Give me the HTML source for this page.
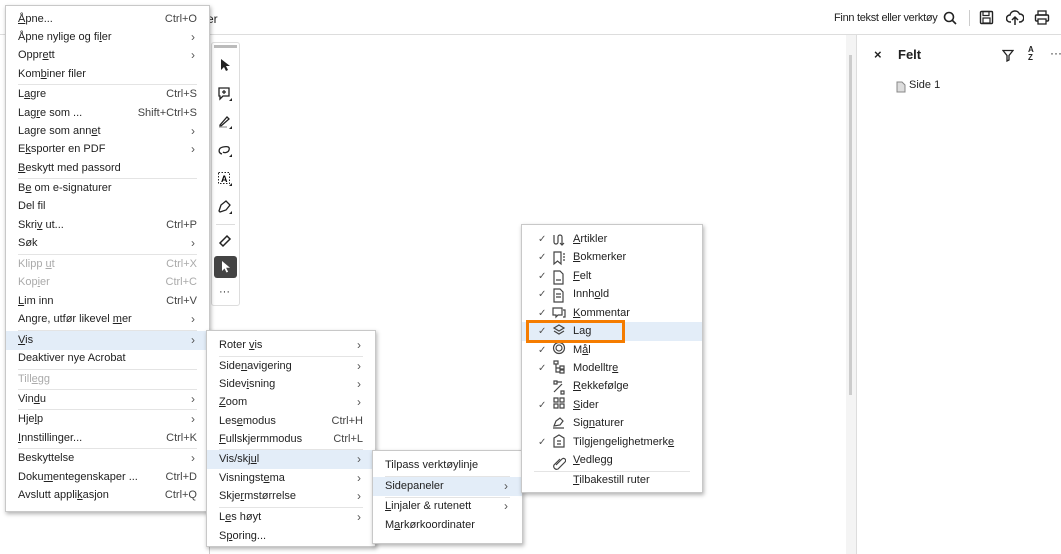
<!DOCTYPE html>
<html><head><meta charset="utf-8"><style>
*{margin:0;padding:0;box-sizing:border-box}
body{width:1061px;height:554px;position:relative;overflow:hidden;background:#fff;font-family:"Liberation Sans",sans-serif;font-size:11px;color:#222}
.a{position:absolute}
.m{position:absolute;background:#fff;border:1px solid #c8c8c8;box-shadow:1px 2px 4px rgba(0,0,0,.3)}
.r{position:absolute;left:0;right:0;height:19px;line-height:19px;padding-left:12px}
.r .k{position:absolute;right:12px;top:0;color:#444}
.r .c{position:absolute;right:14px;top:0;color:#555;font-size:12px}
.d{color:#aaa}.d .k{color:#aaa}
.h{background:#e3edf8}
.s{position:absolute;left:12px;right:12px;height:1px;background:#e4e4e4}
.ck{position:absolute;left:16px;color:#555;font-size:10px}
u{text-decoration:underline}
</style></head><body>
<!-- top bar -->
<div class="a" style="left:0;top:0;width:1061px;height:35px;border-bottom:1px solid #ddd"></div>
<div class="a" style="left:207px;top:12px;font-size:12px">er</div>
<div class="a" style="left:834px;top:12px;font-size:11px;letter-spacing:-0.3px">Finn tekst eller verktøy</div>
<svg class="a" style="left:942px;top:10px" width="16" height="16" viewBox="0 0 16 16"><circle cx="7" cy="7" r="4.5" fill="none" stroke="#222" stroke-width="1.6"/><path d="M10.5 10.5L14 14" stroke="#222" stroke-width="1.6"/></svg>
<div class="a" style="left:969px;top:10px;width:1px;height:16px;background:#ccc"></div>
<svg class="a" style="left:979px;top:10px" width="15" height="15" viewBox="0 0 15 15"><rect x="1.5" y="1.5" width="12" height="12" rx="1" fill="none" stroke="#222" stroke-width="1.4"/><rect x="4" y="1.5" width="6" height="4" fill="none" stroke="#222" stroke-width="1.2"/><rect x="4" y="8" width="7" height="5" fill="none" stroke="#222" stroke-width="1.2"/></svg>
<svg class="a" style="left:1006px;top:10px" width="18" height="16" viewBox="0 0 18 16"><path d="M5 12H4a3.5 3.5 0 0 1 0-7 5 5 0 0 1 9.5-1A3.5 3.5 0 0 1 14 12h-1" fill="none" stroke="#222" stroke-width="1.5"/><path d="M9 15V7M6 10l3-3 3 3" fill="none" stroke="#222" stroke-width="1.5"/></svg>
<svg class="a" style="left:1034px;top:10px" width="16" height="15" viewBox="0 0 16 15"><rect x="4" y="1" width="8" height="4" fill="none" stroke="#222" stroke-width="1.3"/><rect x="1.5" y="5" width="13" height="6" rx="1" fill="none" stroke="#222" stroke-width="1.4"/><rect x="4" y="9" width="8" height="5" fill="#fff" stroke="#222" stroke-width="1.3"/></svg>
<!-- canvas border and scrollbar -->
<div class="a" style="left:209px;top:35px;width:1px;height:519px;background:#ccc"></div>
<div class="a" style="left:846px;top:35px;width:10px;height:519px;background:#f4f4f4"></div>
<div class="a" style="left:849px;top:55px;width:3px;height:340px;background:#ccc"></div>
<div class="a" style="left:856px;top:35px;width:1px;height:519px;background:#ddd"></div>
<!-- right panel -->
<div class="a" style="left:874px;top:47px;font-size:13px;font-weight:bold">×</div>
<div class="a" style="left:898px;top:47px;font-size:13px;font-weight:bold">Felt</div>
<svg class="a" style="left:1002px;top:49px" width="12" height="13" viewBox="0 0 12 13"><path d="M1 1.5h10L7 6.5V11L5 12V6.5z" fill="none" stroke="#222" stroke-width="1.3"/></svg>
<div class="a" style="left:1028px;top:46px;font-size:8px;line-height:8px;font-weight:bold">A<br>Z</div>
<div class="a" style="left:1050px;top:46px;font-size:12px">···</div>
<svg class="a" style="left:896px;top:81px" width="10" height="12" viewBox="0 0 10 12"><path d="M1 1h5l3 3v7H1z" fill="#ddd" stroke="#888"/></svg>
<div class="a" style="left:909px;top:79px">Side 1</div>
<!-- toolbar -->
<div class="a" style="left:211px;top:42px;width:29px;height:264px;border:1px solid #ddd;border-radius:3px;background:#fff"></div>
<div class="a" style="left:214px;top:45px;width:23px;height:3px;background:#bbb"></div>
<svg class="a" style="left:219px;top:58px" width="12" height="14" viewBox="0 0 12 14"><path d="M2 1v11l3-3 2 4 2-1-2-4h4z" fill="#222"/></svg>
<svg class="a" style="left:217px;top:86px" width="16" height="16" viewBox="0 0 16 16"><path d="M2 2h10v8H6l-3 3v-3H2z" fill="none" stroke="#222" stroke-width="1.3"/><path d="M7 4v4M5 6h4" stroke="#222" stroke-width="1.2"/><path d="M12 15l3-3v3z" fill="#222"/></svg>
<svg class="a" style="left:217px;top:114px" width="16" height="16" viewBox="0 0 16 16"><path d="M3 11l7-8 2 2-8 7H3z" fill="none" stroke="#222" stroke-width="1.3"/><path d="M2 13h8" stroke="#999" stroke-width="1.2"/><path d="M12 15l3-3v3z" fill="#222"/></svg>
<svg class="a" style="left:217px;top:142px" width="16" height="16" viewBox="0 0 16 16"><path d="M5 12C1 11 1 6 6 5s7 0 6 3-5 3-6 2" fill="none" stroke="#222" stroke-width="1.3"/><path d="M12 15l3-3v3z" fill="#222"/></svg>
<svg class="a" style="left:217px;top:171px" width="16" height="16" viewBox="0 0 16 16"><rect x="1.5" y="1.5" width="11" height="11" fill="none" stroke="#222" stroke-dasharray="1.5 1.5"/><text x="4" y="11" font-size="9" font-family="Liberation Sans" font-weight="bold">A</text><path d="M12 15l3-3v3z" fill="#222"/></svg>
<svg class="a" style="left:217px;top:199px" width="16" height="16" viewBox="0 0 16 16"><path d="M2 12l2-6 5-4 4 4-4 5-6 2z" fill="none" stroke="#222" stroke-width="1.3"/><path d="M12 15l3-3v3z" fill="#222"/></svg>
<div class="a" style="left:216px;top:224px;width:19px;height:1px;background:#ddd"></div>
<svg class="a" style="left:218px;top:234px" width="14" height="14" viewBox="0 0 14 14"><path d="M2 9l7-7 3 3-7 7z" fill="none" stroke="#222" stroke-width="1.5"/></svg>
<div class="a" style="left:214px;top:256px;width:23px;height:22px;background:#444;border-radius:3px"></div>
<svg class="a" style="left:221px;top:261px" width="10" height="12" viewBox="0 0 10 12"><path d="M1 0v10l2.5-2.5 2 4 1.6-.8-2-4H9z" fill="#fff"/></svg>
<div class="a" style="left:219px;top:286px;font-size:11px">···</div>

<!-- menu 1 -->
<div class="m" style="left:5px;top:5px;width:205px;height:507px">
<div class="r" style="top:4px"><u>Å</u>pne...<span class="k">Ctrl+O</span></div>
<div class="r" style="top:22px">Åpne nylige og fi<u>l</u>er<span class="c">›</span></div>
<div class="r" style="top:40px">Oppr<u>e</u>tt<span class="c">›</span></div>
<div class="r" style="top:59px">Kom<u>b</u>iner filer</div>
<div class="s" style="top:78px"></div>
<div class="r" style="top:79px">L<u>a</u>gre<span class="k">Ctrl+S</span></div>
<div class="r" style="top:98px">Lag<u>r</u>e som ...<span class="k">Shift+Ctrl+S</span></div>
<div class="r" style="top:116px">Lagre som ann<u>e</u>t<span class="c">›</span></div>
<div class="r" style="top:134px">E<u>k</u>sporter en PDF<span class="c">›</span></div>
<div class="r" style="top:153px"><u>B</u>eskytt med passord</div>
<div class="s" style="top:172px"></div>
<div class="r" style="top:173px">B<u>e</u> om e-signaturer</div>
<div class="r" style="top:191px">Del fil</div>
<div class="r" style="top:210px">Skri<u>v</u> ut...<span class="k">Ctrl+P</span></div>
<div class="r" style="top:228px">Søk<span class="c">›</span></div>
<div class="s" style="top:248px"></div>
<div class="r d" style="top:249px">Klipp <u>u</u>t<span class="k">Ctrl+X</span></div>
<div class="r d" style="top:267px">Kop<u>i</u>er<span class="k">Ctrl+C</span></div>
<div class="r" style="top:286px"><u>L</u>im inn<span class="k">Ctrl+V</span></div>
<div class="r" style="top:304px">Angre, utfør likevel <u>m</u>er<span class="c">›</span></div>
<div class="s" style="top:324px"></div>
<div class="r h" style="top:325px;height:19px;right:-5px"><u>V</u>is<span class="c" style="right:19px">›</span></div>
<div class="r" style="top:343px">Deaktiver nye Acrobat</div>
<div class="s" style="top:363px"></div>
<div class="r d" style="top:364px">Till<u>e</u>gg</div>
<div class="s" style="top:383px"></div>
<div class="r" style="top:384px">Vin<u>d</u>u<span class="c">›</span></div>
<div class="s" style="top:403px"></div>
<div class="r" style="top:404px">Hje<u>l</u>p<span class="c">›</span></div>
<div class="r" style="top:423px"><u>I</u>nnstillinger...<span class="k">Ctrl+K</span></div>
<div class="s" style="top:442px"></div>
<div class="r" style="top:443px">Beskyttelse<span class="c">›</span></div>
<div class="r" style="top:462px">Doku<u>m</u>entegenskaper ...<span class="k">Ctrl+D</span></div>
<div class="r" style="top:480px">Avslutt appli<u>k</u>asjon<span class="k">Ctrl+Q</span></div>
</div>

<!-- menu 2 -->
<div class="m" style="left:206px;top:330px;width:170px;height:217px">
<div class="r" style="top:5px">Roter <u>v</u>is<span class="c">›</span></div>
<div class="s" style="top:25px"></div>
<div class="r" style="top:26px">Side<u>n</u>avigering<span class="c">›</span></div>
<div class="r" style="top:44px">Sidev<u>i</u>sning<span class="c">›</span></div>
<div class="r" style="top:62px"><u>Z</u>oom<span class="c">›</span></div>
<div class="r" style="top:81px">Les<u>e</u>modus<span class="k">Ctrl+H</span></div>
<div class="r" style="top:99px"><u>F</u>ullskjermmodus<span class="k">Ctrl+L</span></div>
<div class="s" style="top:118px"></div>
<div class="r h" style="top:119px">Vis/skj<u>u</u>l<span class="c">›</span></div>
<div class="r" style="top:138px">Visningst<u>e</u>ma<span class="c">›</span></div>
<div class="r" style="top:156px">Skje<u>r</u>mstørrelse<span class="c">›</span></div>
<div class="s" style="top:176px"></div>
<div class="r" style="top:177px">L<u>e</u>s høyt<span class="c">›</span></div>
<div class="r" style="top:196px">S<u>p</u>oring...</div>
</div>

<!-- menu 3 -->
<div class="m" style="left:372px;top:450px;width:151px;height:94px">
<div class="r" style="top:5px">Tilpass verktøylinje</div>
<div class="s" style="top:25px"></div>
<div class="r h" style="top:26px">Sidepaneler<span class="c">›</span></div>
<div class="s" style="top:46px"></div>
<div class="r" style="top:46px"><u>L</u>injaler &amp; rutenett<span class="c">›</span></div>
<div class="r" style="top:65px">M<u>a</u>rkørkoordinater</div>
</div>

<!-- menu 4 -->
<div class="m" style="left:521px;top:224px;width:182px;height:269px">
<div class="r" style="top:5px;padding-left:51px"><span class="ck">✓</span><u>A</u>rtikler</div>
<div class="r" style="top:23px;padding-left:51px"><span class="ck">✓</span><u>B</u>okmerker</div>
<div class="r" style="top:42px;padding-left:51px"><span class="ck">✓</span><u>F</u>elt</div>
<div class="r" style="top:60px;padding-left:51px"><span class="ck">✓</span>Innh<u>o</u>ld</div>
<div class="r" style="top:79px;padding-left:51px"><span class="ck">✓</span><u>K</u>ommentar</div>
<div class="r h" style="top:97px;padding-left:51px"><span class="ck">✓</span>Lag</div>
<div class="r" style="top:116px;padding-left:51px"><span class="ck">✓</span>M<u>å</u>l</div>
<div class="r" style="top:134px;padding-left:51px"><span class="ck">✓</span>Modelltr<u>e</u></div>
<div class="r" style="top:152px;padding-left:51px"><u>R</u>ekkefølge</div>
<div class="r" style="top:171px;padding-left:51px"><span class="ck">✓</span><u>S</u>ider</div>
<div class="r" style="top:189px;padding-left:51px">Sig<u>n</u>aturer</div>
<div class="r" style="top:208px;padding-left:51px"><span class="ck">✓</span>Tilgjengelighetmerk<u>e</u></div>
<div class="r" style="top:226px;padding-left:51px"><u>V</u>edlegg</div>
<div class="s" style="top:246px"></div>
<div class="r" style="top:246px;padding-left:51px"><u>T</u>ilbakestill ruter</div>
<!-- icons -->
<svg class="a" style="left:30px;top:7px" width="14" height="250" viewBox="0 0 14 250" fill="none" stroke="#444" stroke-width="1.2">
<path d="M2 3v7a2 2 0 0 0 4 0V5a2 2 0 0 1 4 0v8M8 11l2 2 2-2"/>
<path d="M2 20h7v12l-3.5-3-3.5 3z M11 22h2M11 25h2M11 28h2"/>
<path d="M2 39h6l3 3v10H2z M4 48h5"/>
<path d="M2 57h6l3 3v10H2z M4 62h5M4 65h5"/>
<path d="M1 76h9v7H6l-2 2v-2H1z M11 78h2v7h-2"/>
<path d="M7 93l5 3-5 3-5-3z M2 99l5 3 5-3"/>
<circle cx="7" cy="116" r="5.5"/><circle cx="7" cy="116" r="3"/>
<path d="M2 129h4v3H2z M4 132v8h4M4 136h4M8 134h4v3H8z M8 138h4v3H8z"/>
<path d="M2 149h3v3H2z M9 159h3v3H9z M5 150l5 0M2 160l8-8"/>
<path d="M2 166h4v4H2z M8 166h4v4H8z M2 172h4v4H2z M8 172h4v4H8z"/>
<path d="M2 194l2-5 4-3 3 3-3 4z M1 196h11"/>
<path d="M2 206l5-3 5 3v9H2z M5 209h4M5 212h4"/>
<path d="M4 233l6-6a2 2 0 0 1 3 3l-7 7a3 3 0 0 1-4-4l6-6"/>
</svg>
</div>
<div class="a" style="left:526px;top:320px;width:99px;height:23px;border:3px solid #f57c00"></div>
</body></html>
